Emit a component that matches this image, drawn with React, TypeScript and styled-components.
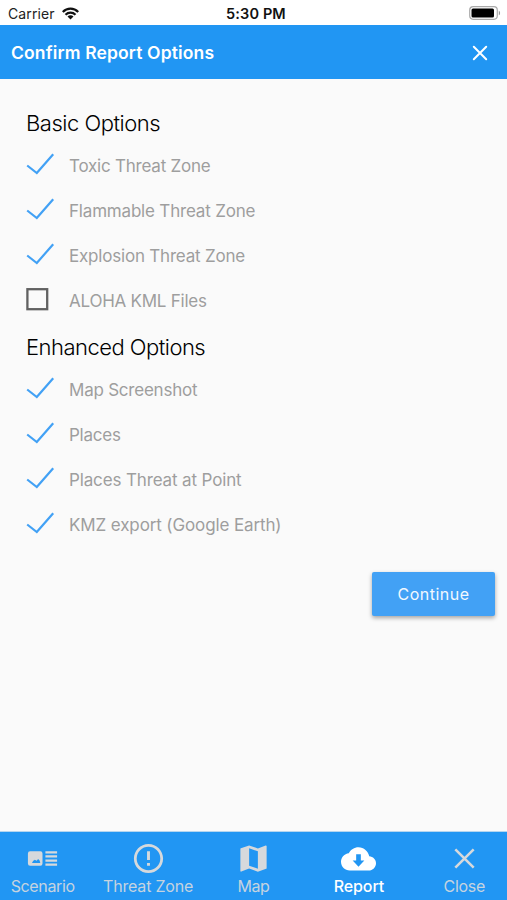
import React from "react";
import styled, { createGlobalStyle } from "styled-components";

const GlobalStyle = createGlobalStyle`
  * { box-sizing: border-box; }
  body { margin: 0; background: #fafafa; font-family: Inter, "Liberation Sans", sans-serif; }
`;

const Screen = styled.div`
  width: 507px;
  height: 900px;
  display: flex;
  flex-direction: column;
  overflow: hidden;
  background: #fafafa;
`;

const StatusBar = styled.div`
  height: 25px;
  flex: none;
  display: grid;
  grid-template-columns: 1fr auto 1fr;
  align-items: center;
  padding: 2px 6px 0 8px;
  background: #fff;
  color: #222;
`;

const Carrier = styled.div`
  display: flex;
  align-items: center;
  gap: 7px;
  font-size: 14px;
  letter-spacing: 0.1px;
`;

const Clock = styled.div`
  font-size: 14.5px;
  font-weight: 600;
  letter-spacing: 0.12px;
  color: #111;
  padding-left: 3px;
`;

const BatterySlot = styled.div`
  display: flex;
  justify-content: flex-end;
  padding-bottom: 2px;
`;

const Header = styled.header`
  height: 54px;
  flex: none;
  display: flex;
  align-items: center;
  justify-content: space-between;
  padding: 2px 18px 0 11px;
  background: #2196f3;
  color: #fff;
`;

const Title = styled.h1`
  margin: 0;
  font-size: 17.5px;
  line-height: 24px;
  font-weight: 600;
  letter-spacing: 0.14px;
`;

const IconButton = styled.button`
  display: flex;
  padding: 0;
  border: 0;
  background: none;
  color: inherit;
`;

const Content = styled.main`
  flex: 1;
  padding: 26px 12px 0 26px;
`;

const SectionTitle = styled.h2<{ $spacing: number }>`
  margin: 0;
  height: 37px;
  line-height: 37px;
  font-size: 22px;
  font-weight: 300;
  letter-spacing: ${(p) => p.$spacing}px;
  color: #000;
`;

const Options = styled.div<{ $height: number }>`
  height: ${(p) => p.$height}px;
`;

const OptionRow = styled.div`
  height: 45.15px;
  display: flex;
  align-items: center;
  color: #9e9e9e;
  font-size: 17px;
`;

const Mark = styled.span`
  width: 43px;
  height: 30px;
  display: flex;
  align-items: center;
`;

const Label = styled.span<{ $spacing: number }>`
  padding-top: 2px;
  letter-spacing: ${(p) => p.$spacing}px;
  white-space: nowrap;
`;

const Actions = styled.div`
  display: flex;
  justify-content: flex-end;
  padding-top: 25px;
`;

const ContinueButton = styled.button`
  width: 123px;
  height: 44px;
  padding: 0;
  border: 0;
  border-radius: 2px;
  background: #42a1f5;
  color: #f2f8ff;
  font: 400 16px Inter, "Liberation Sans", sans-serif;
  letter-spacing: 0.5px;
  box-shadow: 0 2px 4px rgba(0, 0, 0, 0.35);
`;

const TabBar = styled.nav`
  height: 69px;
  flex: none;
  display: grid;
  grid-template-columns: repeat(5, 105.4px);
  justify-content: center;
  border-top: 1px solid #b5d6ef;
  background: #2196f3;
`;

const Tab = styled.div<{ $active?: boolean; $spacing: number }>`
  display: flex;
  flex-direction: column;
  align-items: center;
  padding-top: 9px;
  font-size: 16px;
  line-height: 20px;
  font-weight: ${(p) => (p.$active ? 500 : 400)};
  letter-spacing: ${(p) => p.$spacing}px;
  color: ${(p) => (p.$active ? "#fff" : "#c5d3df")};

  svg { display: block; flex: none; color: ${(p) => (p.$active ? "#fff" : "#d6d9dc")}; }
`;

const WifiIcon = () => (
  <svg width="17" height="13" viewBox="0 0 17 13" fill="none" stroke="#111" strokeWidth="2.2">
    <path d="M.8 4.9C5.1.5 11.9.5 16.2 4.9" />
    <path d="M3.5 7.7C6.3 4.9 10.7 4.9 13.5 7.7" />
    <path d="M8.5 12.5L5.5 9.5C7.2 7.9 9.8 7.9 11.5 9.5Z" fill="#111" stroke="none" />
  </svg>
);

const BatteryIcon = () => (
  <svg width="32" height="14" viewBox="0 0 32 14">
    <rect x=".7" y=".7" width="27.6" height="12.6" rx="3.5" fill="#fff" stroke="#aaa" strokeWidth="1.2" />
    <rect x="2.5" y="2.5" width="22.5" height="9" rx="1.5" fill="#000" />
    <path d="M29.8 4.7C31.5 5.3 31.5 8.7 29.8 9.3Z" fill="#999" />
  </svg>
);

const HeaderCloseIcon = () => (
  <svg width="18" height="18" viewBox="0 0 18 18" stroke="currentColor" strokeWidth="2" strokeLinecap="round">
    <path d="M2.8 2.8l12.4 12.4m0-12.4L2.8 15.2" />
  </svg>
);

const CheckIcon = () => (
  <svg width="29" height="24" viewBox="0 0 29 24" fill="none" stroke="#42a1f5" strokeWidth="2.2">
    <path d="M1.2 12.5L10.8 20L27.2 1.2" />
  </svg>
);

const BoxIcon = () => (
  <svg width="24" height="24" viewBox="0 0 24 24" fill="none" stroke="#616161" strokeWidth="2.3">
    <rect x="1.4" y="1.2" width="19.8" height="20" />
  </svg>
);

const ScenarioIcon = () => (
  <svg width="35" height="35" viewBox="0 0 24 24" fill="currentColor">
    <path fillRule="evenodd" d="M3.5 7h7a1.5 1.5 0 0 1 1.5 1.5v7a1.5 1.5 0 0 1-1.5 1.5h-7A1.5 1.5 0 0 1 2 15.500v-7A1.500 1.500 0 0 1 3.500 7zm7 8l-.5-1.700-1-.9-1 1.200-1.300-.8-1.200.9-.7 1.300z" />
    <path d="M14 7h8v1.500h-8zm0 2.830h8v1.500h-8zm0 2.830h8v1.500h-8zm0 2.840h8V17h-8z" />
  </svg>
);

const AlertIcon = () => (
  <svg width="35" height="35" viewBox="0 0 24 24" fill="currentColor">
    <path d="M11 15h2v2h-2zm0-8h2v6h-2zm.99-5C6.47 2 2 6.48 2 12s4.47 10 9.99 10C17.52 22 22 17.52 22 12S17.52 2 11.99 2zM12 20.1a8.1 8.1 0 1 1 0-16.2 8.1 8.1 0 0 1 0 16.2z" />
  </svg>
);

const MapIcon = () => (
  <svg width="35" height="35" viewBox="0 0 24 24" fill="currentColor">
    <path d="M20.5 3l-.16.03L15 5.1 9 3 3.36 4.9c-.21.07-.36.25-.36.48V20.5c0 .28.22.5.5.5l.16-.03L9 18.9l6 2.1 5.64-1.9c.21-.07.36-.25.36-.48V3.5c0-.28-.22-.5-.5-.5zM15 19l-6-2.11V5l6 2.11V19z" />
  </svg>
);

const CloudIcon = () => (
  <svg width="35" height="35" viewBox="0 0 24 24" fill="currentColor">
    <path fillRule="evenodd" d="M19.35 10.54C18.67 7.09 15.64 4.3 12 4.3 9.11 4.3 6.6 5.94 5.35 8.34 2.34 8.66 0 11.21 0 14.3c0 3.31 2.69 6 6 6h13c2.76 0 5-2.24 5-5 0-2.64-2.05-4.58-4.65-4.76zM10.4 9.1h3.2v4.3h2.4L12 17.6 8 13.4h2.4z" />
  </svg>
);

const CloseTabIcon = () => (
  <svg width="35" height="35" viewBox="0 0 24 24" fill="none" stroke="currentColor" strokeWidth="1.75">
    <path d="M5.7 5.7l12.6 12.6m0-12.6L5.7 18.3" />
  </svg>
);

const basicOptions = [
  { label: "Toxic Threat Zone", checked: true, spacing: -0.22 },
  { label: "Flammable Threat Zone", checked: true, spacing: -0.19 },
  { label: "Explosion Threat Zone", checked: true, spacing: -0.2 },
  { label: "ALOHA KML Files", checked: false, spacing: -0.24 },
];

const enhancedOptions = [
  { label: "Map Screenshot", checked: true, spacing: -0.23 },
  { label: "Places", checked: true, spacing: -0.25 },
  { label: "Places Threat at Point", checked: true, spacing: -0.14 },
  { label: "KMZ export (Google Earth)", checked: true, spacing: -0.12 },
];

const tabs = [
  { label: "Scenario", icon: <ScenarioIcon />, spacing: -0.35 },
  { label: "Threat Zone", icon: <AlertIcon />, spacing: -0.2 },
  { label: "Map", icon: <MapIcon />, spacing: -0.4 },
  { label: "Report", icon: <CloudIcon />, spacing: -0.1, active: true },
  { label: "Close", icon: <CloseTabIcon />, spacing: -0.3 },
];

const Option = ({ label, checked, spacing }: { label: string; checked: boolean; spacing: number }) => (
  <OptionRow>
    <Mark>{checked ? <CheckIcon /> : <BoxIcon />}</Mark>
    <Label $spacing={spacing}>{label}</Label>
  </OptionRow>
);

export default function App() {
  return (
    <Screen>
      <GlobalStyle />
      <StatusBar>
        <Carrier>Carrier <WifiIcon /></Carrier>
        <Clock>5:30 PM</Clock>
        <BatterySlot><BatteryIcon /></BatterySlot>
      </StatusBar>
      <Header>
        <Title>Confirm Report Options</Title>
        <IconButton aria-label="Close"><HeaderCloseIcon /></IconButton>
      </Header>
      <Content>
        <SectionTitle $spacing={-0.48}>Basic Options</SectionTitle>
        <Options $height={187}>
          {basicOptions.map((o) => <Option key={o.label} {...o} />)}
        </Options>
        <SectionTitle $spacing={-0.52}>Enhanced Options</SectionTitle>
        <Options $height={181}>
          {enhancedOptions.map((o) => <Option key={o.label} {...o} />)}
        </Options>
        <Actions><ContinueButton>Continue</ContinueButton></Actions>
      </Content>
      <TabBar>
        {tabs.map((t) => (
          <Tab key={t.label} $active={t.active} $spacing={t.spacing}>
            {t.icon}
            {t.label}
          </Tab>
        ))}
      </TabBar>
    </Screen>
  );
}
